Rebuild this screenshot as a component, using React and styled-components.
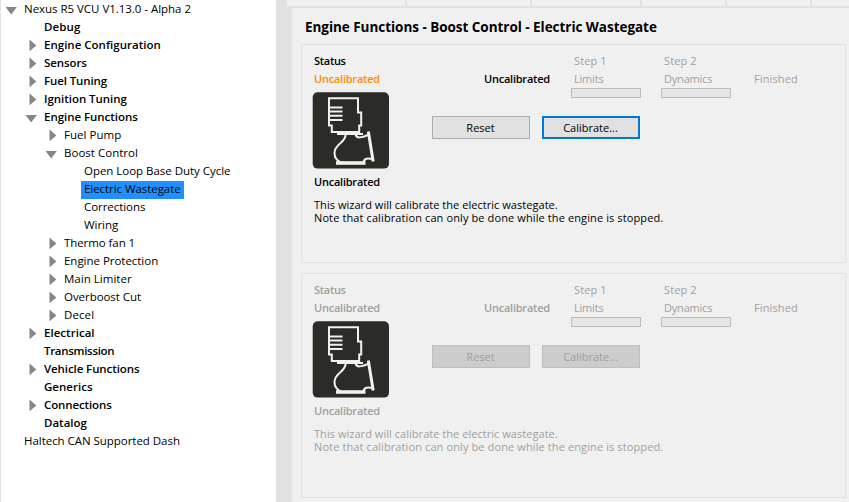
import React from "react";
import styled, { createGlobalStyle } from "styled-components";

const GlobalStyle = createGlobalStyle`
  *, *::before, *::after { box-sizing: border-box; }
  body {
    margin: 0;
    overflow: hidden;
    background: #f0f0f0;
    font-family: "Open Sans", "Noto Sans", sans-serif;
    font-size: 11.5px;
    color: #000;
  }
`;

const Window = styled.div`
  display: flex;
  width: 849px;
  height: 502px;
  background: #f0f0f0;
`;

/* ---------- navigation tree ---------- */

const Tree = styled.nav`
  flex: none;
  width: 276px;
  padding-top: 1px;
  border-left: 1px solid #e2e2e2;
  background: #fff;
`;

const TreeRow = styled.div`
  display: flex;
  height: 18px;
  padding-left: ${(p) => p.$level * 20}px;
`;

const Toggle = styled.span`
  flex: none;
  width: 20px;
  height: 18px;
`;

const ToggleIcon = styled.svg`
  display: block;
  fill: #868686;
`;

const TreeLabel = styled.span`
  height: 18px;
  padding: 0 3px;
  line-height: 16px;
  white-space: nowrap;
  font-weight: ${(p) => (p.$bold ? 600 : 400)};
  letter-spacing: ${(p) => p.$track || 0}px;
  background: ${(p) => (p.$selected ? "#1e90ff" : "transparent")};
`;

/* ---------- content area ---------- */

const Splitter = styled.div`
  flex: none;
  width: 11px;
  background: #e1e1e1;
`;

const Content = styled.main`
  flex: 1;
  min-width: 0;
  display: flex;
  flex-direction: column;
`;

const TabStrip = styled.div`
  display: flex;
  flex: none;
  height: 8px;
  border-bottom: 2px solid #e1e1e1;
`;

const TabEdge = styled.div`
  flex: none;
  width: ${(p) => p.$width}px;
  border-right: 2px solid #e1e1e1;
`;

const Page = styled.section`
  flex: 1;
  padding: 8px 3px 0 9px;
  border-left: 5px solid #e1e1e1;
`;

const Title = styled.h1`
  height: 28px;
  margin: 0 0 0 4px;
  font-size: 13.5px;
  line-height: 22px;
  font-weight: 700;
  letter-spacing: -0.04px;
  white-space: nowrap;
`;

const Group = styled.div`
  height: ${(p) => p.$height}px;
  margin-bottom: 10px;
  padding: 8px 0 0 11px;
  border: 1px solid #e1e1e1;
  color: ${(p) => (p.$disabled ? "#a0a0a0" : "#000")};
`;

const GroupTop = styled.div`
  display: flex;
`;

const StatusColumn = styled.div`
  width: 119px;
  flex: none;
`;

const Label = styled.div`
  height: 18px;
  padding-left: 1px;
  font-size: 11px;
  line-height: 16px;
  font-weight: ${(p) => (p.$bold ? 600 : 400)};
  letter-spacing: ${(p) => p.$track || 0}px;
  color: ${(p) => p.$color || "inherit"};
  white-space: nowrap;
`;

const ActuatorIcon = styled.svg`
  display: block;
  margin: 3px 0 5px -1px;
`;

const WizardColumn = styled.div`
  flex: 1;
`;

const Steps = styled.div`
  display: grid;
  grid-template-columns: 141px 90px 90px 1fr;
  height: 63px;
`;

const StateCell = styled.div`
  padding: 18px 0 0 51px;
`;

const Step = styled.div`
  color: #a0a0a0;
`;

const ProgressTrack = styled.div`
  width: 70px;
  height: 10px;
  margin: -1px 0 0 -2px;
  border: 1px solid #bcbcbc;
  background: #e6e6e6;
`;

const Buttons = styled.div`
  display: flex;
  gap: 12px;
`;

const Button = styled.button`
  width: 98px;
  height: 23px;
  padding: 1px 1px 0 0;
  border: ${(p) => (p.$focused ? "2px solid #0078d7" : "1px solid #adadad")};
  background: #e1e1e1;
  font: 11px/16px "Open Sans", "Noto Sans", sans-serif;
  color: #000;

  &:disabled {
    border-color: #bfbfbf;
    background: #cccccc;
    color: #a0a0a0;
  }
`;

const Note = styled.p`
  margin: 6px 0 0 1px;
  font-size: 11px;
  line-height: 13px;
  white-space: nowrap;
`;

const NoteLine = styled.span`
  display: block;
  letter-spacing: ${(p) => p.$track}px;
`;

/* level, label, arrow state, bold, tracking */
const TREE = [
  [0, "Nexus R5 VCU V1.13.0 - Alpha 2", "open", false, -0.03],
  [1, "Debug", null, true, 0.12],
  [1, "Engine Configuration", "closed", true, 0.01],
  [1, "Sensors", "closed", true, -0.08],
  [1, "Fuel Tuning", "closed", true, -0.12],
  [1, "Ignition Tuning", "closed", true, -0.04],
  [1, "Engine Functions", "open", true, -0.04],
  [2, "Fuel Pump", "closed", false, 0.04],
  [2, "Boost Control", "open", false, 0.02],
  [3, "Open Loop Base Duty Cycle", null, false, -0.03],
  [3, "Electric Wastegate", null, false, -0.06],
  [3, "Corrections", null, false, -0.06],
  [3, "Wiring", null, false, -0.06],
  [2, "Thermo fan 1", "closed", false, -0.08],
  [2, "Engine Protection", "closed", false, -0.03],
  [2, "Main Limiter", "closed", false, 0.02],
  [2, "Overboost Cut", "closed", false, -0.05],
  [2, "Decel", "closed", false, 0.1],
  [1, "Electrical", "closed", true, 0.03],
  [1, "Transmission", null, true, -0.3],
  [1, "Vehicle Functions", "closed", true, -0.09],
  [1, "Generics", null, true, 0.03],
  [1, "Connections", "closed", true, -0.12],
  [1, "Datalog", null, true, 0],
  [0, "Haltech CAN Supported Dash", null, false, -0.04],
];

const TAB_WIDTHS = [120, 125, 110, 85, 85];

function Arrow({ state }) {
  return (
    <ToggleIcon width="20" height="18" viewBox="0 0 20 18">
      {state === "open" && <path d="M4.5 6H15.8L10.2 13.6Z" />}
      {state === "closed" && <path d="M8.5 2.6V14.2L15.4 8.4Z" />}
    </ToggleIcon>
  );
}

function Wastegate() {
  return (
    <ActuatorIcon width="78" height="77" viewBox="0 0 78 77">
      <rect x="0.7" y="0.3" width="76.3" height="76.3" rx="5" fill="#2b2b27" />
      <g fill="none" stroke="#f1f1ed" strokeWidth="2">
        <path d="M17 6.3H46V20.5H49.2V33.5H47.2V40H19.8V33.5H17Z" />
        <path d="M17 15.4H30.5M17 19.6H30.5M17 23.8H30.5M17 28H30.5" />
        <path d="M25 42H51" />
        <path d="M33.6 42.5C33.8 51 22.5 51.5 22.5 61C22.5 66 25 69 29.5 71" />
        <path d="M43.5 42.5C44.5 47 50 45.5 56 43" />
        <path d="M51.5 70C52 66.5 56 65.5 61 67.5" />
        <path d="M56.3 39.5L61.2 69.5" strokeWidth="3" />
        <path d="M24 71H53.5" strokeWidth="3.6" />
      </g>
    </ActuatorIcon>
  );
}

function Calibration({ disabled, height }) {
  return (
    <Group $disabled={disabled} $height={height}>
      <GroupTop>
        <StatusColumn>
          <Label $bold $track={-0.3}>Status</Label>
          <Label $bold $track={-0.23} $color={disabled ? "#a0a0a0" : "#ff8c00"}>
            Uncalibrated
          </Label>
          <Wastegate />
          <Label $bold $track={-0.23}>Uncalibrated</Label>
        </StatusColumn>
        <WizardColumn>
          <Steps>
            <StateCell>
              <Label $bold $track={-0.23}>Uncalibrated</Label>
            </StateCell>
            <Step>
              <Label $track={0.1}>Step 1</Label>
              <Label $track={-0.2}>Limits</Label>
              <ProgressTrack />
            </Step>
            <Step>
              <Label $track={0.1}>Step 2</Label>
              <Label $track={-0.2}>Dynamics</Label>
              <ProgressTrack />
            </Step>
            <Step>
              <Label />
              <Label $track={0.12}>Finished</Label>
            </Step>
          </Steps>
          <Buttons>
            <Button disabled={disabled}>Reset</Button>
            <Button disabled={disabled} $focused={!disabled}>Calibrate...</Button>
          </Buttons>
        </WizardColumn>
      </GroupTop>
      <Note>
        <NoteLine $track={0.04}>This wizard will calibrate the electric wastegate.</NoteLine>
        <NoteLine $track={0.11}>
          Note that calibration can only be done while the engine is stopped.
        </NoteLine>
      </Note>
    </Group>
  );
}

export default function App() {
  return (
    <Window>
      <GlobalStyle />
      <Tree>
        {TREE.map(([level, label, state, bold, track]) => (
          <TreeRow key={label} $level={level}>
            <Toggle>{state && <Arrow state={state} />}</Toggle>
            <TreeLabel $bold={bold} $track={track} $selected={label === "Electric Wastegate"}>
              {label}
            </TreeLabel>
          </TreeRow>
        ))}
      </Tree>
      <Splitter />
      <Content>
        <TabStrip>
          {TAB_WIDTHS.map((width, i) => (
            <TabEdge key={i} $width={width} />
          ))}
        </TabStrip>
        <Page>
          <Title>Engine Functions - Boost Control - Electric Wastegate</Title>
          <Calibration height={219} />
          <Calibration height={225} disabled />
        </Page>
      </Content>
    </Window>
  );
}
